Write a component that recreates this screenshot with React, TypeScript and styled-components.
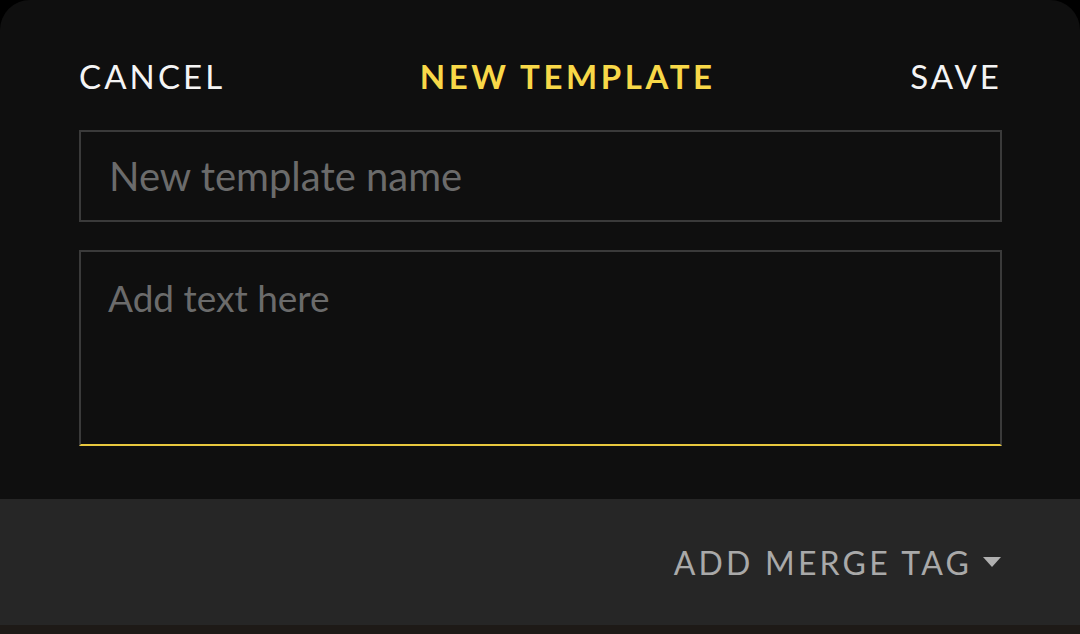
import { createGlobalStyle } from 'styled-components';
import styled from 'styled-components';

const GlobalStyle = createGlobalStyle`
  html, body {
    margin: 0;
    padding: 0;
    background: #000;
  }
  * {
    box-sizing: border-box;
  }
`;

const Screen = styled.div`
  width: 1080px;
  height: 634px;
  display: flex;
  flex-direction: column;
  background: #000;
  font-family: Lato, 'Noto Sans', sans-serif;
  overflow: hidden;
`;

const Sheet = styled.div`
  flex: 1;
  display: flex;
  flex-direction: column;
  background: #0f0f0f;
  border-radius: 30px 30px 0 0;
  padding: 51px 78px 0 79px;
`;

const Header = styled.div`
  display: flex;
  justify-content: space-between;
  align-items: center;
  height: 50px;
  margin-bottom: 29px;
`;

const HeaderButton = styled.button`
  background: none;
  border: none;
  padding: 0;
  margin: 0;
  font-family: inherit;
  font-size: 33px;
  letter-spacing: 3.1px;
  color: #f4f4f4;
  cursor: pointer;
`;

const Title = styled.h1`
  margin: 0;
  font-size: 33px;
  font-weight: 700;
  letter-spacing: 3.6px;
  color: #f8d848;
`;

const Fields = styled.div`
  display: flex;
  flex-direction: column;
  gap: 28px;
`;

const NameInput = styled.input`
  width: 100%;
  height: 92px;
  background: #0f0f0f;
  border: 2px solid #3a3a3a;
  padding: 0 28px;
  font-family: inherit;
  font-size: 40px;
  color: #e0e0e0;
  outline: none;

  &::placeholder {
    color: #6b6b6b;
  }
`;

const TextArea = styled.textarea`
  width: 100%;
  height: 196px;
  background: #0f0f0f;
  border: 2px solid #3a3a3a;
  border-bottom-color: #e8c83e;
  padding: 23px 27px;
  font-family: inherit;
  font-size: 37px;
  color: #e0e0e0;
  outline: none;
  resize: none;
  display: block;

  &::placeholder {
    color: #6b6b6b;
  }
`;

const Footer = styled.div`
  height: 126px;
  background: #262626;
  display: flex;
  justify-content: flex-end;
  align-items: center;
  padding-right: 79px;
`;

const MergeTagButton = styled.button`
  display: flex;
  align-items: center;
  gap: 11px;
  background: none;
  border: none;
  padding: 0;
  font-family: inherit;
  font-size: 32px;
  letter-spacing: 3.2px;
  color: #a9a9a9;
  cursor: pointer;
`;

const Caret = styled.span`
  width: 0;
  height: 0;
  border-left: 9px solid transparent;
  border-right: 9px solid transparent;
  border-top: 10px solid #b0b0b0;
`;

const BottomStrip = styled.div`
  height: 9px;
  background: #1e1a17;
`;

export default function App() {
  return (
    <>
      <GlobalStyle />
      <Screen>
        <Sheet>
          <Header>
            <HeaderButton>CANCEL</HeaderButton>
            <Title>NEW TEMPLATE</Title>
            <HeaderButton>SAVE</HeaderButton>
          </Header>
          <Fields>
            <NameInput placeholder="New template name" />
            <TextArea placeholder="Add text here" />
          </Fields>
        </Sheet>
        <Footer>
          <MergeTagButton>
            ADD MERGE TAG
            <Caret />
          </MergeTagButton>
        </Footer>
        <BottomStrip />
      </Screen>
    </>
  );
}
